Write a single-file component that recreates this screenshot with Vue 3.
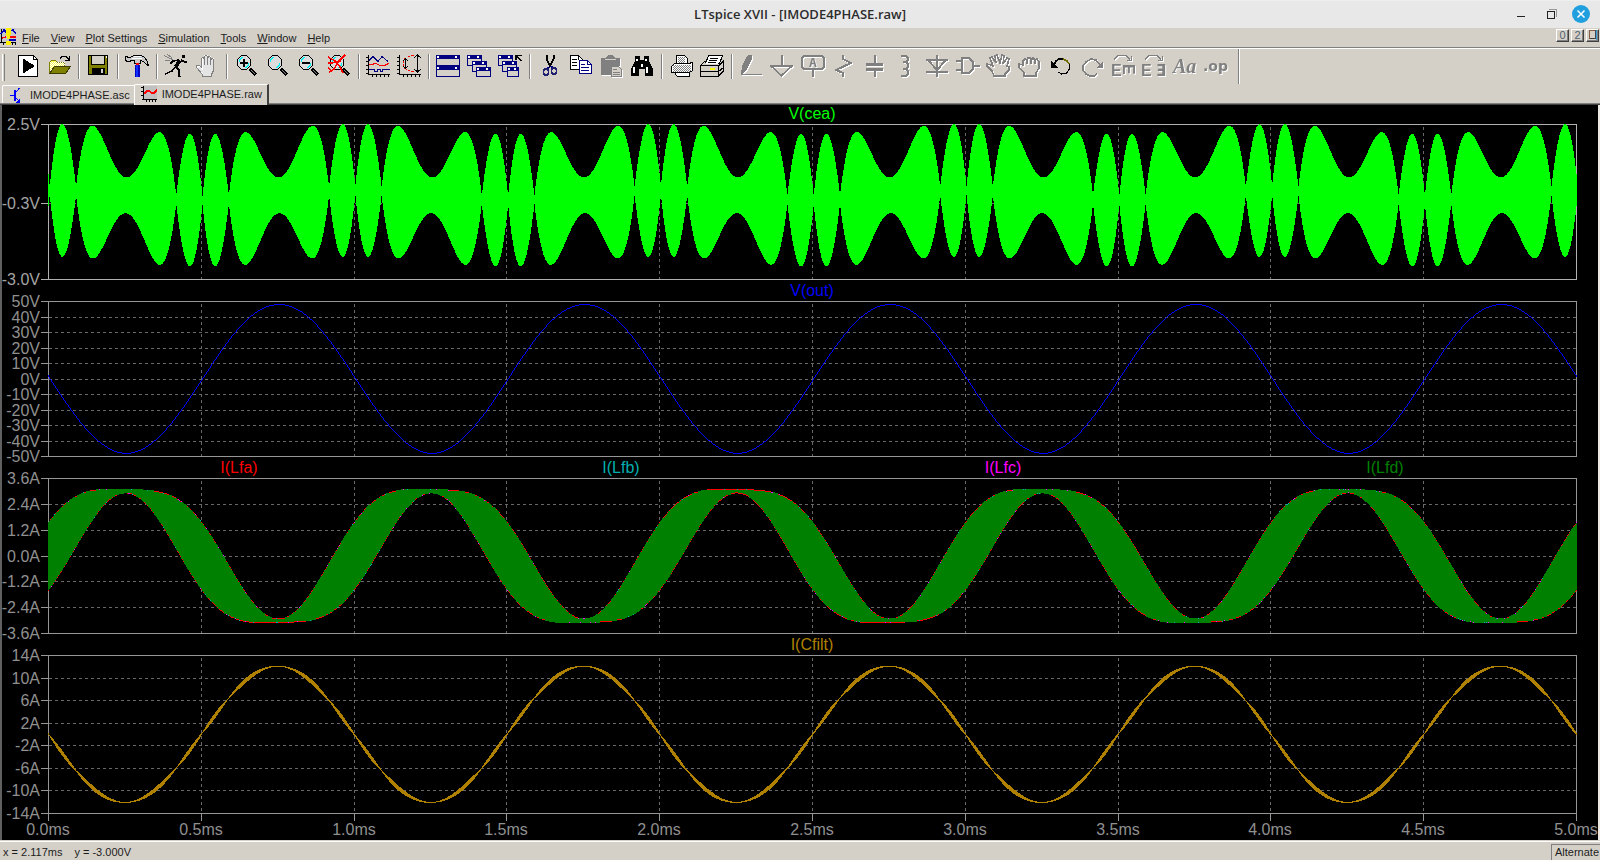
<script setup>
import { ref, computed, onMounted, onBeforeUnmount } from 'vue'

const menus = ['File', 'View', 'Plot Settings', 'Simulation', 'Tools', 'Window', 'Help']

const lens =
  '<path d="M16 15l6 6" stroke="#000" stroke-width="3.400" fill="none"/><path d="M17 16l4 4" stroke="#808080" fill="none"/>' +
  '<path d="M7.500 1.500h5l4 4v6l-4 4h-5l-4-4v-6z" fill="#dcdcdc" stroke="#000" stroke-width="1.300"/><path d="M5.500 8V6l3-3M14.500 9v2l-3 3" stroke="#00f0f0" fill="none"/>'
const win = (x, y, w, h, bar) =>
  `<rect x="${x}" y="${y}" width="${w}" height="${h}" fill="#000080"/><rect x="${x + 1}" y="${y + bar}" width="${w - 2}" height="${h - bar - 1}" fill="#d4d0c8"/>` +
  `<rect x="${x + 1}" y="${y + 1}" width="2" height="2" fill="#fff"/><rect x="${x + w - 5}" y="${y + 1}" width="2" height="2" fill="#fff"/>`
const axes = '<path d="M2.500 1v20M2 20.500h22M0 3.500h2M0 7.500h2M0 11.500h2M0 15.500h2M0 19.500h2M6.500 21v2M10.500 21v2M14.500 21v2M18.500 21v2M22.500 21v2" stroke="#000" fill="none"/>'
const dots = (x, y, w, h) => {
  let d = ''
  for (let j = 0; j < h; j++) for (let i = j % 2; i < w; i += 2) d += `M${x + i} ${y + j}h1v1h-1z`
  return d
}

const groups = [
  [
    { n: 'Run', s: '<path d="M2.500 1.500h15l4 4v17h-19z" fill="#fff" stroke="#000"/><path d="M17.500 1.500v4h4" fill="none" stroke="#000"/><path d="M7 5v14h1l11-7L8 5z"/>' },
    { n: 'Open', s: `<path d="M2.500 19.500V8.500l2-2h4l2 2h7v4" fill="#ffff60" stroke="#808000"/><path d="${dots(3, 8, 15, 11)}" fill="#fff"/><path d="M2.500 19.500l5-7h16l-5 7z" fill="#808000" stroke="#3c3c00"/><path d="M13 4.500l2-2h4l3 3M22.500 2v5M18 6.500h4" fill="none" stroke="#000"/>` }
  ],
  [
    { n: 'Save', s: '<rect x="2.500" y="1.500" width="19" height="19" fill="#808000" stroke="#000"/><rect x="5" y="2" width="14" height="9" fill="#000"/><rect x="6" y="2" width="12" height="8" fill="#d4d0c8"/><rect x="20" y="2" width="1" height="2" fill="#fff"/><rect x="6" y="14" width="13" height="7"/><rect x="15" y="15" width="2" height="4" fill="#d4d0c8"/>' }
  ],
  [
    { n: 'Control Panel', s: '<path d="M.500 6.500v-4h2v1h3l3-2h8l3 2 3 4 1 4-2-1-3-3-3-1v3h-6v-3h-3l-2 1h-3v-1z" fill="#c8c8c8" stroke="#000"/><path d="M7 4.500h10M9 2.500h7" stroke="#fff"/><rect x="11" y="9" width="3" height="2" fill="#f00"/><rect x="10" y="11" width="5" height="12" fill="#0000c0"/><rect x="11" y="11" width="2" height="12" fill="#1030ff"/>' }
  ],
  [
    { n: 'Simulate', s: '<path d="M0 1.500l6 3 3 1M3 .500l5 3M1 6.500h5" stroke="#808080" fill="none"/><path d="M18 1h3v3h-3zM14 6l4 1-3 4-2 4-3-3z"/><path d="M17 5.500l4 3 2-1M15 6l-6 1-3 3M12 13l3 3v6l2 .500M12 12l-4 5-7 3" stroke="#000" stroke-width="1.500" fill="none"/>' },
    { n: 'Halt', s: '<path d="M7.500 15V4.500h2V11V1.500h3V11V2.500h3V11V4.500h3v12l-2 3v3h-9v-3l-5-5v-2h3z" fill="#e4e4e4" stroke="#fff"/><path d="M6.500 14V4.500l1-1 2 1V11M9.500 10V2.500l1.500-1.500 1.500 1.500V11M12.500 3.500l2-1 1 1V11M15.500 5.500l2-1 1 1v11l-2 4v2h-9v-2l-6-7v-2h3l2 2" fill="none" stroke="#808080"/>' }
  ],
  [
    { n: 'Zoom In', s: lens + '<path d="M6 8h8v2H6zM9 5h2v8H9z"/>' },
    { n: 'Pan', s: lens },
    { n: 'Zoom Out', s: lens + '<path d="M6 8h8v2H6z"/>' },
    { n: 'Zoom Full Extents', s: lens + '<path d="M1 3l7 4 5 6 3 6M18 1l-6 6-5 8-5 3M1 9h4l9-2M1 14l4 3" stroke="#f00" stroke-width="1.600" fill="none"/>' }
  ],
  [
    { n: 'Autorange', s: axes + '<path d="M3 6.500l4-4 5 5 4-5 6 5" stroke="#000080" fill="none"/><path d="M3 10.500h3l4-1 4 2h4l5-2" stroke="#f00" stroke-width="1.200" fill="none"/><path d="M3 15.500h5v2h3v-2h3v2h2v-2h8" stroke="#000080" fill="none"/>' },
    { n: 'Plot Limits', s: axes + '<path d="M17 1.500h-3l-6 3-2 3v4l2 3 6 3h3" stroke="#f00" stroke-dasharray="3 1" fill="none"/><path d="M8.500 5v9M6 7l2.500-2L11 7M6 12l2.500 2 2.500-2M20.500 1v17M17 4l3.500-3L24 4M17 15l3.500 3 3.500-3" stroke="#000" fill="none"/>' }
  ],
  [
    { n: 'Tile Windows', s: win(0, 1, 24, 11, 4) + win(0, 12, 24, 11, 4) },
    { n: 'Cascade Windows', s: win(0, 1, 15, 11, 4) + win(5, 7, 15, 11, 4) + win(9, 13, 15, 10, 4) },
    { n: 'Close All Windows', s: win(0, 1, 15, 11, 4) + win(4, 7, 15, 11, 4) + win(9, 13, 12, 10, 4) + '<path d="M18 6V1.500h6M18.500 2l5 5" stroke="#000" stroke-width="1.600" fill="none"/>' }
  ],
  [
    { n: 'Cut', s: '<path d="M9.500 1v4l4 8M16.500 1v4l-4 8" stroke="#000" stroke-width="2" fill="none"/><path d="M12 13l-2 3M14 12l2 3" stroke="#000080" stroke-width="2"/><rect x="6.500" y="15" width="5" height="6" rx="2" fill="none" stroke="#202070" stroke-width="1.800"/><rect x="14.500" y="14" width="5" height="6" rx="2" fill="none" stroke="#202070" stroke-width="1.800"/>' },
    { n: 'Copy', s: '<path d="M2.500 1.500h8l4 4v10h-12z" fill="#fff" stroke="#000"/><path d="M4 5.500h5M4 8.500h5M4 11.500h5M10.500 1.500v4" stroke="#000"/><path d="M11.500 6.500h8l4 4v9h-12z" fill="#fff" stroke="#000080"/><path d="M13 10.500h4M13 13.500h8M13 16.500h8M19.500 6.500v4h4" stroke="#000080" fill="none"/>' },
    { n: 'Paste', d: 1, s: '<path d="M2 4h5l2-3h5l2 3h5v8h-9v9H2z" fill="#808080"/><rect x="6" y="5" width="11" height="1" fill="#d4d0c8"/><path d="M12.500 12.500h7l3 3v7h-10z" fill="#d4d0c8" stroke="#808080"/><path d="M14 15.500h4M14 18.500h7M14 20.500h7" stroke="#808080"/>' },
    { n: 'Find', s: '<path d="M5 2h5v4h4V2h5v5l4 8v7h-8v-7h-6v7H1v-7l4-8z"/><path d="M7 5v2M16 5v2M4 13v6M12 10v3M17 13v6" stroke="#fff" stroke-width="1.600"/>' }
  ],
  [
    { n: 'Print Preview', s: `<path d="M7.500 9.500v-8h8l3 3v5" fill="#fff" stroke="#000"/><path d="M2.500 18.500v-6l3-3h14l4-1v8l-3 2z" fill="#fff" stroke="#000"/><path d="${dots(4, 11, 18, 7)}${dots(9, 3, 7, 6)}" fill="#808080"/><path d="M6.500 18.500h14v4h-12l-2-2z" fill="#fff" stroke="#000"/>` },
    { n: 'Print', s: '<path d="M5.500 9.500l3-8h14l-3 8" fill="#fff" stroke="#000"/><path d="M10 4.500h8M9 6.500h8M8 8.500h8" stroke="#000"/><path d="M.500 11.500l4-4h2M18 9.500h3l2-2v10l-5 5H.500v-11h18M18.500 22v-10l5-5M.500 17.500h18l5-4" fill="none" stroke="#000"/><path d="M10 14h5v2h-5z" fill="#ff0"/>' }
  ],
  [
    { n: 'Wire', d: 1, s: '<path d="M8 2l2-1h3v4L8 15l-6 6 1-9zM2 20h21v1H2z" fill="#808080"/>' },
    { n: 'Ground', d: 1, s: '<path d="M11 1h2v11h-2zM0 11h23v2H0z" fill="#808080"/><path d="M1.500 12.500l10 9 10-9" fill="none" stroke="#808080" stroke-width="1.600"/>' },
    { n: 'Label Net', d: 1, s: '<path d="M3 2h18l2 2v9l-2 2H3l-2-2V4z" fill="none" stroke="#808080" stroke-width="2"/><path d="M12 16v7" stroke="#808080" stroke-width="2"/><text x="12" y="13" font-family="DejaVu Sans Mono" font-weight="bold" font-size="13" text-anchor="middle" fill="#808080">A</text>' },
    { n: 'Resistor', d: 1, s: '<path d="M11 1v4l8 4-15 7 7 3v4" fill="none" stroke="#808080" stroke-width="2"/>' },
    { n: 'Capacitor', d: 1, s: '<path d="M11 1h2v8h7v3H3V9h8zM3 14h17v3h-7v6h-2v-6H3z" fill="#808080"/>' },
    { n: 'Inductor', d: 1, s: '<path d="M7 2h5l2 2v2l-2 2H9h3l2 2v3l-2 2H9h3l2 2v3l-2 2H7" fill="none" stroke="#808080" stroke-width="2"/>' },
    { n: 'Diode', d: 1, s: '<path d="M12 1v22M1 6h22M3 6l9 10 9-10M1 18h22" fill="none" stroke="#808080" stroke-width="2"/>' },
    { n: 'Component', d: 1, s: '<path d="M6 4h7l4 4v7l-4 4H6zM0 7h5M0 16h5M17 12h7" fill="none" stroke="#808080" stroke-width="2.400"/>' },
    { n: 'Move', d: 1, s: '<path d="M7 22l-2-5-5-5v-2l4 1 2 1-3-8 2-1 4 6-1-7 2-1 3 8 2-8 2 1-1 8 4-6 2 1-2 7 2 1v3l-4 4v2z" fill="none" stroke="#808080" stroke-width="1.600"/>' },
    { n: 'Drag', d: 1, s: '<path d="M6 22v-3l-5-6v-3l4 1V7l2-2 2 1 1-2h2l1 2 2-2 2 2 2-1 2 3v6l-3 5v3zM9 6v4M13 6v4M17 6v4" fill="none" stroke="#808080" stroke-width="1.600"/>' },
    { n: 'Undo', s: '<path d="M5 11l2-4 3-2h4" fill="none" stroke="#000" stroke-width="1.600"/><path d="M14 5l4 2 2 3" fill="none" stroke="#706c00" stroke-width="1.600"/><path d="M20.500 10v5l-3 4-5 1-3-2" fill="none" stroke="#000" stroke-width="1.200"/><path d="M2 7v7h7z"/>' },
    { n: 'Redo', d: 1, s: '<path d="M20 11l-4-5-5-1-5 3-3 4v4l3 4 4 2h4l3-2" fill="none" stroke="#808080" stroke-width="1.600"/><path d="M23 7v7h-7z" fill="#808080"/>' },
    { n: 'Rotate', d: 1, s: '<path d="M3 5.500l4-4h8l4 4M20.500 2v4H16" fill="none" stroke="#808080"/><text x="0" y="22" font-family="Liberation Sans" font-weight="bold" font-size="16" fill="#808080">E</text><text font-family="Liberation Sans" font-weight="bold" font-size="16" fill="#808080" transform="translate(12 10) rotate(90)">E</text>' },
    { n: 'Mirror', d: 1, s: '<path d="M3 5.500l4-4h8l4 4M20.500 2v4H16" fill="none" stroke="#808080"/><text x="-1" y="22" font-family="Liberation Sans" font-weight="bold" font-size="16" fill="#808080">E</text><text x="14" y="22" font-family="DejaVu Sans" font-weight="bold" font-size="15" fill="#808080">Ǝ</text>' },
    { n: 'Text', d: 1, s: '<text x="0" y="19" font-family="Liberation Serif" font-style="italic" font-weight="bold" font-size="20" fill="#808080">Aa</text>' },
    { n: 'SPICE Directive', d: 1, s: '<text x="-1" y="17" font-family="DejaVu Sans" font-size="14" font-weight="bold" fill="#808080">.op</text>' }
  ],
  []
]

/* ---- waveform window ---- */
const chart = ref(null)
const W = ref(1596)
const H = ref(735)
let ro
onMounted(() => {
  ro = new ResizeObserver(([e]) => {
    W.value = Math.floor(e.contentRect.width)
    H.value = Math.floor(e.contentRect.height)
  })
  ro.observe(chart.value)
})
onBeforeUnmount(() => ro.disconnect())

const HEAD = 19
const GAP = 22
const FOOT = 27
const LEFT = 46
const RIGHT = 22

const dutySwing = 0.4855
const lag = 0.004
const swing = (p) => dutySwing * Math.sin(2 * Math.PI * (p - lag))
const ripple4 = (p) => {
  const f = (((4 * swing(p)) % 1) + 1) % 1
  return 4 * f * (1 - f)
}
const sin = (p) => Math.sin(2 * Math.PI * p)
const cos = (p) => Math.cos(2 * Math.PI * p)

const column = (x, a, b) => {
  const y1 = Math.round(Math.min(a, b))
  const y2 = Math.max(y1 + 1, Math.round(Math.max(a, b)))
  return `M${x} ${y1}h1V${y2}h-1z`
}

const plotW = computed(() => Math.max(100, W.value - LEFT - RIGHT))
const phase = (i) => (i * 5) / plotW.value

function ceaTrace(top, h) {
  let d = ''
  for (let i = 0; i <= plotW.value; i++) {
    const p = phase(i)
    const c = top + h * (0.46 - 0.032 * cos(p - lag))
    const r = h * (0.028 + 0.4 * ripple4(p))
    d += column(LEFT + i, Math.max(top, c - r), c + r)
  }
  return [{ color: '#00ff00', d }]
}
function outTrace(top, h) {
  let d = ''
  const y = (i) => top + h * (0.5 + 0.48 * sin(phase(i) - 0.0065))
  for (let i = 0; i <= plotW.value; i++) d += column(LEFT + i, y(i), y(i + 1))
  return [{ color: '#0000ff', d }]
}
function inductorTrace(top, h) {
  const out = { '#ff0000': '', '#00b0b0': '', '#ff00ff': '', '#008000': '' }
  let seed = 7
  const random = () => {
    seed = (seed * 1103515245 + 12345) % 2147483648
    return seed / 2147483648
  }
  const base = () => (random() < 0.5 ? '#ff0000' : '#008000')
  const speck = (color) => {
    const v = random()
    return v < 0.04 ? '#ff00ff' : v < 0.07 ? '#00b0b0' : color
  }
  let upper = { y: -1, color: '' }
  let lower = { y: -1, color: '' }
  for (let i = 0; i <= plotW.value; i++) {
    const p = phase(i)
    const c = top + h * (0.503 - 0.418 * sin(p - 0.001))
    const r = h * (0.002 + 0.219 * (1 - (swing(p) / 0.5) ** 2))
    const x = LEFT + i
    const y1 = Math.round(c - r)
    const y2 = Math.round(c + r)
    if (y1 !== upper.y) upper = { y: y1, color: base() }
    if (y2 !== lower.y) lower = { y: y2, color: base() }
    out['#008000'] += column(x, y1, y2)
    out[speck(upper.color)] += column(x, y1, y1 + 1)
    out[speck(lower.color)] += column(x, y2 - 1, y2)
  }
  return ['#008000', '#ff0000', '#00b0b0', '#ff00ff'].map((color) => ({ color, d: out[color] }))
}
function filterTrace(top, h) {
  let d = ''
  const y = (i) => top + h * (0.502 + 0.431 * sin(phase(i) - 0.002))
  for (let i = 0; i <= plotW.value; i++) {
    const r = 2 * ripple4(phase(i))
    d += column(LEFT + i, Math.min(y(i), y(i + 1)) - r, Math.max(y(i), y(i + 1)) + r)
  }
  return [{ color: '#b08000', d }]
}

const specs = [
  { names: [['V(cea)', '#00ff00']], ticks: ['2.5V', '-0.3V', '-3.0V'], at: [0, 0.51, 1], trace: ceaTrace, active: true },
  { names: [['V(out)', '#0000ff']], ticks: [50, 40, 30, 20, 10, 0, -10, -20, -30, -40, -50].map((v) => v + 'V'), trace: outTrace },
  {
    names: [['I(Lfa)', '#ff0000'], ['I(Lfb)', '#00b0b0'], ['I(Lfc)', '#ff00ff'], ['I(Lfd)', '#008000']],
    ticks: ['3.6A', '2.4A', '1.2A', '0.0A', '-1.2A', '-2.4A', '-3.6A'],
    trace: inductorTrace
  },
  { names: [['I(Cfilt)', '#b08000']], ticks: [14, 10, 6, 2, -2, -6, -10, -14].map((v) => v + 'A'), trace: filterTrace }
]

const xTicks = computed(() =>
  Array.from({ length: 11 }, (_, k) => ({ x: LEFT + Math.round((plotW.value * k) / 10), label: (k / 2).toFixed(1) + 'ms' }))
)
const panes = computed(() => {
  const room = Math.max(200, H.value - HEAD - FOOT - GAP * 3)
  const base = Math.floor(room / 4)
  return specs.map((s, k) => {
    const top = HEAD + k * (base + GAP)
    const h = k === 3 ? room - base * 3 : base
    return {
      key: k,
      top,
      h,
      active: s.active,
      names: s.names.map(([text, color], i) => ({ text, color, x: LEFT + Math.round((plotW.value * (2 * i + 1)) / (2 * s.names.length)) })),
      ticks: s.ticks.map((text, i) => ({ text, y: top + Math.round(h * (s.at ? s.at[i] : i / (s.ticks.length - 1))) })),
      traces: s.trace(top, h)
    }
  })
})
const bottom = computed(() => panes.value[3].top + panes.value[3].h)
</script>

<template>
  <div class="app">
    <header class="title">
      <h1>LTspice XVII - [IMODE4PHASE.raw]</h1>
      <div class="winbtns">
        <button aria-label="Minimize"><svg width="20" height="20" shape-rendering="crispEdges"><path d="M6 12h8v1H6z" fill="#222" /></svg></button>
        <button aria-label="Restore"><svg width="20" height="20" shape-rendering="crispEdges"><path d="M8 5.500h7.500V13" fill="none" stroke="#999" /><path d="M6.500 7.500h7v7h-7z" fill="none" stroke="#222" /></svg></button>
        <button aria-label="Close"><svg width="20" height="20"><circle cx="10" cy="10" r="9" fill="#209fdf" /><path d="M6.500 6.500l7 7M13.500 6.500l-7 7" stroke="#fff" stroke-width="1.500" /></svg></button>
      </div>
    </header>

    <nav class="menu">
      <svg class="logo" width="16" height="17" shape-rendering="crispEdges">
        <rect width="16" height="16" fill="#c8c8c8" />
        <path d="M1.500 1v14M0 14.500h16M3 14v3M6 14v3M12 14v3M15 14v3" stroke="#000" fill="none" />
        <path d="M1 6l3-4 3 3M10 3l3-1 3 4M9 12h7" stroke="#0000c0" stroke-width="1.500" fill="none" />
        <path d="M2 10l4-1M10 9h6" stroke="#f00" stroke-width="1.500" />
        <path d="M6 0h5v3l-1 8H7L6 4zM6 13h5v4H6z" fill="#ffee00" />
      </svg>
      <button v-for="m in menus" :key="m"><u>{{ m[0] }}</u>{{ m.slice(1) }}</button>
      <div class="mdi">
        <button aria-label="Minimize document">0</button>
        <button aria-label="Restore document">2</button>
        <button aria-label="Close document"><svg width="11" height="11" shape-rendering="crispEdges"><path d="M2 8.500h7" stroke="#404040" /><path d="M2.500 0v9M2 .500h7" stroke="#8c5c40" /><path d="M8.500 0v9" stroke="#404858" /><path d="M9.500 0v10" stroke="#40a0d8" /></svg></button>
      </div>
    </nav>

    <div class="toolbar" role="toolbar" aria-label="Main toolbar">
      <span class="grip"></span>
      <template v-for="(g, gi) in groups" :key="gi">
        <span v-if="gi" class="sep" :class="{ end: !g.length }"></span>
        <button v-for="b in g" :key="b.n" :aria-label="b.n">
          <svg width="24" height="24" shape-rendering="crispEdges" :class="{ off: b.d }" v-html="b.s"></svg>
        </button>
      </template>
    </div>

    <div class="tabs">
      <button class="tab">
        <svg width="16" height="16" shape-rendering="crispEdges"><path d="M1 8.500h5M10.500 1L6 6.500M6 10l4 4" stroke="#00f" fill="none" /><path d="M5 3h2v11H5zM11 11v5H7z" fill="#00f" /></svg>
        <span>IMODE4PHASE.asc</span>
      </button>
      <button class="tab on">
        <svg width="16" height="16" shape-rendering="crispEdges"><rect x="2" width="14" height="13" fill="#c0c0c0" /><path d="M2.500 0v14M0 1.500h2M0 5.500h2M0 9.500h2M1 13.500h15M5.500 14v2M8.500 14v2M11.500 14v2M14.500 14v2" stroke="#000" /><path d="M3 8l3-3h2l3 2h2l3-3" stroke="#f00" stroke-width="1.600" fill="none" /></svg>
        <span>IMODE4PHASE.raw</span>
      </button>
    </div>

    <main ref="chart" class="chart">
      <svg :width="W" :height="H" role="img" aria-label="Waveform plots">
        <g v-for="p in panes" :key="p.key" :class="{ active: p.active }">
          <g class="grid" shape-rendering="crispEdges">
            <path v-for="t in xTicks.slice(1, -1)" :key="t.label" :d="`M${t.x + 0.5} ${p.top + 3}V${p.top + p.h}`" />
            <path v-for="t in p.ticks.slice(1, -1)" :key="t.text" :d="`M${LEFT + 1} ${t.y + 0.5}H${LEFT + plotW}`" />
          </g>
          <g class="frame" shape-rendering="crispEdges">
            <rect :x="LEFT + 0.5" :y="p.top + 0.5" :width="plotW" :height="p.h" />
            <path v-for="t in p.ticks" :key="t.text" :d="`M${LEFT - 7} ${t.y + 0.5}h7`" />
          </g>
          <path v-for="t in p.traces" :key="t.color" :d="t.d" :fill="t.color" shape-rendering="crispEdges" />
          <text v-for="t in p.ticks" :key="t.text" class="axis" :x="LEFT - 8" :y="t.y + 6" text-anchor="end">{{ t.text }}</text>
          <text v-for="n in p.names" :key="n.text" :x="n.x" :y="p.top - 5" :fill="n.color" text-anchor="middle">{{ n.text }}</text>
        </g>
        <g v-for="t in xTicks" :key="t.label">
          <path class="xtick" shape-rendering="crispEdges" :d="`M${t.x + 0.5} ${bottom}v8`" />
          <text class="axis" :x="t.x" :y="bottom + 22" text-anchor="middle">{{ t.label }}</text>
        </g>
      </svg>
    </main>

    <footer class="status">
      <span>x = 2.117ms</span>
      <span>y = -3.000V</span>
      <span class="mode">Alternate</span>
    </footer>
  </div>
</template>

<style>
body { margin: 0; background: #d4d0c8; }
</style>

<style scoped>
.app {
  height: 100vh;
  display: flex;
  flex-direction: column;
  overflow: hidden;
  background: #d4d0c8;
  color: #1c1c1c;
  font: 11px/14px "Liberation Sans", Arial, sans-serif;
}
button {
  margin: 0;
  padding: 0;
  border: 0;
  background: none;
  color: inherit;
  font: inherit;
}
svg { display: block; flex: none; }

.title {
  display: grid;
  grid-template-columns: 1fr auto 1fr;
  align-items: center;
  height: 28px;
  flex: none;
  box-sizing: border-box;
  padding-bottom: 1px;
  background: #e8e8e8;
  border-top: 1px solid #efefef;
}
.title h1 {
  grid-column: 2;
  margin: 0;
  font: 600 13px/20px "Open Sans", "Noto Sans", sans-serif;
  color: #2c2c2c;
}
.winbtns { display: flex; justify-content: flex-end; gap: 10px; padding-right: 9px; }

.menu {
  display: flex;
  align-items: center;
  gap: 11px;
  height: 20px;
  flex: none;
  box-sizing: border-box;
  border-bottom: 1px solid #808080;
}
.logo { margin-right: -5px; align-self: flex-start; }
.mdi { display: flex; gap: 2px; margin-left: auto; padding-right: 1px; }
.mdi button {
  width: 13px;
  height: 13px;
  margin-bottom: 4px;
  box-sizing: border-box;
  border: 1px solid;
  border-color: #fff #404040 #404040 #fff;
  box-shadow: inset -1px -1px #808080;
  font-size: 11px;
  line-height: 9px;
  color: #506070;
  overflow: hidden;
}

.toolbar {
  display: flex;
  align-items: flex-start;
  height: 36px;
  flex: none;
  box-sizing: border-box;
  border-top: 1px solid #fff;
  padding-top: 5px;
}
.toolbar button { width: 31px; height: 25px; padding: 0 3px 1px 4px; flex: none; }
.toolbar svg { overflow: visible; }
.off { filter: drop-shadow(1px 1px 0 #fff); }
.grip {
  width: 1px;
  height: 27px;
  margin: 0 7px 0 2px;
  border-left: 1px solid #fff;
  border-right: 1px solid #808080;
}
.sep { width: 8px; height: 25px; flex: none; box-sizing: border-box; padding-left: 4px; }
.sep::before { content: ""; display: block; width: 0; height: 100%; border-left: 1px solid #808080; border-right: 1px solid #fff; }
.sep.end { width: 12px; height: 35px; padding-left: 7px; margin-top: -5px; }

.tabs {
  display: flex;
  align-items: flex-end;
  height: 21px;
  flex: none;
  box-sizing: border-box;
  padding-left: 2px;
  border-bottom: 1px solid #404040;
  box-shadow: inset 0 -1px #808080;
}
.tab {
  display: flex;
  align-items: center;
  gap: 5px;
  height: 18px;
  margin-bottom: 1px;
  padding: 0 4px 0 6px;
  box-sizing: border-box;
  border-top: 1px solid #fff;
  border-left: 1px solid #fff;
  border-top-left-radius: 2px;
}
.tab.on {
  height: 21px;
  margin-bottom: -1px;
  padding: 0 5px 3px 6px;
  border-right: 2px solid #404040;
  background: #d4d0c8;
}

.chart {
  flex: 1;
  min-height: 0;
  overflow: hidden;
  background: #000;
  border-left: 2px solid #606060;
  border-right: 2px solid #ece9e2;
}
.chart text { font: 16px "Liberation Sans", Arial, sans-serif; }
.grid path { stroke: #686868; stroke-dasharray: 3 3; fill: none; }
.frame rect, .frame path, .xtick { stroke: #969696; fill: none; }
.active .frame rect, .active .frame path { stroke: #b0b0b0; }
.chart .axis { fill: #909090; }
.chart .active .axis { fill: #a4a4a4; }

.status {
  display: flex;
  align-items: center;
  gap: 12px;
  height: 20px;
  flex: none;
  box-sizing: border-box;
  padding: 2px 0 0 3px;
  border-top: 1px solid #d4d0c8;
  box-shadow: inset 0 1px #fff;
}
.mode {
  margin-left: auto;
  padding: 0 1px 1px 3px;
  border-top: 1px solid #808080;
  border-left: 1px solid #808080;
}
</style>
